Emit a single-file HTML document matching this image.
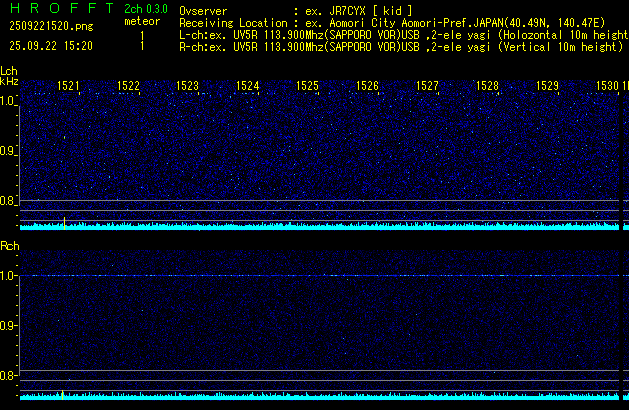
<!DOCTYPE html>
<html><head><meta charset="utf-8">
<style>
html,body{margin:0;padding:0;background:#000;width:629px;height:410px;overflow:hidden}
#root{position:relative;width:629px;height:410px;background:#000;overflow:hidden}
.fb{position:absolute}
canvas{position:absolute;left:0;top:0}
</style></head><body><div id="root">
<div class="fb" style="left:20px;top:80px;width:609px;height:151px;background:#00003c"></div>
<div class="fb" style="left:20px;top:250px;width:609px;height:151px;background:#00002c"></div>
<div class="fb" style="left:20px;top:225px;width:609px;height:5px;background:#0ff"></div>
<div class="fb" style="left:20px;top:395px;width:609px;height:5px;background:#0ff"></div>
<canvas id="c" width="629" height="410"></canvas>
<script>
var MF={
'O':[0,".XXX.|X...X|X...X|X...X|X...X|X...X|X...X|X...X|.XXX."],
'v':[3,"X...X|X...X|.X.X.|.X.X.|..X..|..X.."],
's':[3,".XXX.|X...X|.XX..|...X.|X...X|.XXX."],
'e':[3,".XXX.|X...X|XXXXX|X....|X...X|.XXX."],
'r':[3,".X.XX|.XX..|.X...|.X...|.X...|.X..."],
':':[2,".XX..|.XX..|.....|.....|.....|.XX..|.XX.."],
'x':[3,"X...X|.X.X.|..X..|..X..|.X.X.|X...X"],
'.':[7,".XX..|.XX.."],
',':[7,".XX..|.XX..|.X..."],
'J':[0,"...X.|...X.|...X.|...X.|...X.|...X.|X..X.|X..X.|.XX.."],
'R':[0,"XXXX.|X...X|X...X|X...X|X...X|XXXX.|X...X|X...X|X...X"],
'C':[0,".XXX.|X...X|X...X|X....|X....|X....|X...X|X...X|.XXX."],
'Y':[0,"X...X|X...X|.X.X.|.X.X.|..X..|..X..|..X..|..X..|..X.."],
'X':[0,"X...X|X...X|.X.X.|.X.X.|..X..|.X.X.|.X.X.|X...X|X...X"],
'[':[-1,"..XXX|..X..|..X..|..X..|..X..|..X..|..X..|..X..|..X..|..X..|..XXX"],
']':[-1,"XXX..|..X..|..X..|..X..|..X..|..X..|..X..|..X..|..X..|..X..|XXX.."],
'k':[0,"X....|X....|X....|X...X|X..X.|XXX..|X.X..|X..X.|X...X"],
'i':[0,"..X..|..X..|.....|..X..|..X..|..X..|..X..|..X..|..X.."],
'd':[0,"....X|....X|....X|.XXXX|X...X|X...X|X...X|X...X|.XXXX"],
'c':[3,".XXX.|X...X|X....|X....|X...X|.XXX."],
'n':[3,"XXXX.|X...X|X...X|X...X|X...X|X...X"],
'g':[3,".XXXX|X..X.|.XX..|X....|.XXX.|X...X|.XXX."],
'L':[0,"X....|X....|X....|X....|X....|X....|X....|X....|XXXXX"],
'o':[3,".XXX.|X...X|X...X|X...X|X...X|.XXX."],
'a':[3,".XX..|X..X.|.XXX.|X..X.|X..X.|.XX.X"],
't':[0,".X...|.X...|.X...|XXX..|.X...|.X...|.X...|.X...|..XX."],
'A':[0,"..X..|..X..|.X.X.|.X.X.|.X.X.|XXXXX|X...X|X...X|X...X"],
'm':[3,"XX.X.|X.X.X|X.X.X|X.X.X|X.X.X|X.X.X"],
'y':[3,"X...X|X...X|.X.X.|.X.X.|..X..|..X..|XX..."],
'P':[0,"XXXX.|X...X|X...X|X...X|XXXX.|X....|X....|X....|X...."],
'f':[0,".XXX.|.X...|.X...|XXX..|.X...|.X...|.X...|.X...|.X..."],
'N':[0,"X...X|XX..X|XX..X|X.X.X|X.X.X|X..XX|X..XX|X...X|X...X"],
'(':[-1,"...X.|..X..|..X..|.X...|.X...|.X...|.X...|.X...|..X..|..X..|...X."],
')':[-1,".X...|..X..|..X..|...X.|...X.|...X.|...X.|...X.|..X..|..X..|.X..."],
'E':[0,"XXXXX|X....|X....|X....|XXXX.|X....|X....|X....|XXXXX"],
'h':[0,"X....|X....|X....|XXXX.|X...X|X...X|X...X|X...X|X...X"],
'U':[0,"X...X|X...X|X...X|X...X|X...X|X...X|X...X|X...X|.XXX."],
'V':[0,"X...X|X...X|X...X|.X.X.|.X.X.|.X.X.|..X..|..X..|..X.."],
'M':[0,"X...X|XX.XX|XX.XX|XX.XX|XX.XX|X.X.X|X.X.X|X.X.X|X.X.X"],
'z':[3,"XXXXX|....X|...X.|..X..|.X...|XXXXX"],
'S':[0,".XXX.|X...X|X....|.X...|..X..|...X.|....X|X...X|.XXX."],
'B':[0,"XXXX.|X...X|X...X|X...X|XXXX.|X...X|X...X|X...X|XXXX."],
'l':[0,"..X..|..X..|..X..|..X..|..X..|..X..|..X..|..X..|..X.."],
'H':[0,"X...X|X...X|X...X|X...X|XXXXX|X...X|X...X|X...X|X...X"],
'p':[3,"XXXX.|X...X|X...X|X...X|XXXX.|X....|X...."],
'-':[4,"XXXX"],
'0':[0,".XX.|X..X|X..X|X..X|X..X|X..X|X..X|X..X|.XX."],
'1':[0,"..X.|.XX.|..X.|..X.|..X.|..X.|..X.|..X.|..X."],
'2':[0,".XX.|X..X|...X|...X|..X.|.X..|.X..|X...|XXXX"],
'3':[0,".XX.|X..X|X..X|...X|.XX.|...X|X..X|X..X|.XX."],
'4':[0,"...X.|..XX.|..XX.|.X.X.|.X.X.|X..X.|XXXXX|...X.|...X."],
'5':[0,"XXXX|X...|X...|XXX.|...X|...X|X..X|X..X|.XX."],
'6':[0,".XX.|X..X|X..X|X...|XXX.|X..X|X..X|X..X|.XX."],
'7':[0,"XXXX|...X|...X|..X.|..X.|.X..|.X..|.X..|.X.."],
'8':[0,".XX.|X..X|X..X|X..X|.XX.|X..X|X..X|X..X|.XX."],
'9':[0,".XX.|X..X|X..X|X..X|.XXX|...X|...X|X..X|.XX."]
};

(function(){
var cv=document.getElementById('c'),ctx=cv.getContext('2d');
var W=629,H=410;
var img=ctx.createImageData(W,H),d=img.data;
var seed=12345;
function rnd(){seed^=seed<<13;seed>>>=0;seed^=seed>>>17;seed^=seed<<5;seed>>>=0;return seed/4294967296;}
function px(x,y,r,g,b){if(x<0||y<0||x>=W||y>=H)return;var i=(y*W+x)*4;d[i]=r;d[i+1]=g;d[i+2]=b;d[i+3]=255;}
function rect(x0,y0,x1,y1,r,g,b){for(var y=y0;y<=y1;y++)for(var x=x0;x<=x1;x++)px(x,y,r,g,b);}
for(var i=0;i<W*H;i++){d[i*4+3]=255;}
function ray(){var u=rnd();return Math.sqrt(-2*Math.log(u+1e-12));}
function noise(y0,y1,t0,t1,cy){
  for(var y=y0;y<=y1;y++)for(var x=20;x<W;x++){
    var r=ray();
    if(r>cy){px(x,y,40,140+(rnd()*70|0),255);continue;}
    var v=255*(r-t0)/(t1-t0);
    if(v<0)v=0;
    var g=0; if(v>240){g=(v-240)*0.4; if(g>40)g=40;}
    if(v>255)v=255;
    px(x,y,0,g|0,v|0);
  }
}
noise(80,230,1.0,2.95,3.45);
noise(250,400,1.1,3.9,4.15);
// faint line in L at y=93
for(var x=20;x<W;x++){ if(rnd()<0.07) px(x,93,40,150+(rnd()*60|0),255); }
// 1kHz carrier in R
for(var x=20;x<W;x++){
  var q=rnd();
  if(q<0.14) px(x,275,50,170+(rnd()*50|0),255);
  else if(q<0.80) px(x,275,0,10+(rnd()*40|0),190+(rnd()*65|0));
  else px(x,275,0,0,80+(rnd()*90|0));
}
var G=[128,128,128];
function spec(top,marker,dist){
  [120,130,140].forEach(function(o){rect(20,top+o,W-1,top+o,G[0],G[1],G[2]);});
  for(var x=20;x<W;x++){
    var q=rnd(),h=3;
    if(q<dist[0])h=3; else if(q<dist[1])h=4; else if(q<dist[2])h=5; else if(q<dist[3])h=6; else h=7;
    rect(x,top+149-h,x,top+149,0,255,255);
  }
  rect(619,top,622,top+150,0,0,0);
  rect(19,top+26,19,top+125,G[0],G[1],G[2]);
  rect(marker[0],top+marker[1],marker[0],top+149,255,255,0);
}
spec(80,[64,137],[0.30,0.70,0.88,0.96]);
spec(250,[62,140],[0.55,0.80,0.92,0.97]);
function ticks(top,start){
  for(var y=top+start;y<=top+145;y+=10){
    var major=((y-top-25)%50===0);
    if(major) rect(14,y,17,y,255,255,0);
    else rect(16,y,17,y,255,255,0);
  }
}
ticks(80,15);
ticks(250,5);
var T=[79,139,198,258,318,378,438,498,558,618];
T.forEach(function(t){ rect(t-22,80,t,91,0,0,0); rect(t,92,t,94,255,255,0); });
rect(623,80,628,91,0,0,0);
px(64,136,60,170,255);px(64,137,240,240,0);px(64,138,60,220,60);

// ---- bitmap text ----
function glyph(x,y,rows,col){
  var rs=rows.split('|');
  for(var j=0;j<rs.length;j++)for(var i=0;i<rs[j].length;i++) if(rs[j][i]==='X') px(x+i,y+j,col[0],col[1],col[2]);
}
var YL=[255,255,0],GR=[0,255,0];
function mono(x,y,s,col){
  col=col||YL;
  for(var k=0;k<s.length;k++){var g=MF[s[k]]; if(g) glyph(x+k*6,y+g[0],g[1],col);}
}
mono(10,21,'2509221520.png');
mono(10,41,'25.09.22 15:20');
mono(125,16,'meteor');
mono(140,31,'1');
mono(140,41,'1');
mono(180,6,'Ovserver           : ex. JR7CYX [ kid ]');
mono(180,18,'Receiving Location : ex. Aomori City Aomori-Pref.JAPAN(40.49N, 140.47E)');
mono(180,30,'L-ch:ex. UV5R 113.900Mhz(SAPPORO VOR)USB ,2-ele yagi (Holozontal 10m height)');
mono(180,42,'R-ch:ex. UV5R 113.900Mhz(SAPPORO VOR)USB ,2-ele yagi (Vertical 10m height)');
for(var k=0;k<10;k++) mono(T[k]-22,81,''+(1521+k));
mono(622,81,"1");
glyph(628,81,"X|X|X|X|X|X|X|X|X",YL);
// big green HROFFT
glyph(11,3,"X......X|X......X|X......X|X......X|XXXXXXXX|X......X|X......X|X......X|X......X|X......X",GR);
glyph(31,3,"XXXXXX.|X.....X|X.....X|X.....X|XXXXXX.|X...X..|X....X.|X....X.|X.....X|X.....X",GR);
glyph(50,3,"..XXXXX..|.X.....X.|X.......X|X.......X|X.......X|X.......X|X.......X|X.......X|.X.....X.|..XXXXX..",GR);
var F="XXXXXXX|X......|X......|X......|XXXXXX.|X......|X......|X......|X......|X......";
glyph(71,3,F,GR);glyph(89,3,F,GR);
glyph(106,3,"XXXXXXX|...X...|...X...|...X...|...X...|...X...|...X...|...X...|...X...|...X...",GR);
// 2ch 0.3.0
glyph(125,4,".XXX.|X...X|....X|...X.|..X..|.X...|X....|X....|XXXXX",GR);
glyph(131,7,MF['c'][1],GR);
glyph(137,4,MF['h'][1],GR);
glyph(147,4,MF['0'][1],GR);
px(153,12,0,255,0);
glyph(155,4,".XX.|X..X|...X|...X|.XX.|...X|...X|X..X|.XX.",GR);
px(161,12,0,255,0);
glyph(163,4,MF['0'][1],GR);
// axis labels
glyph(1,66,MF['L'][1],YL); glyph(6,69,MF['c'][1],YL); glyph(12,66,MF['h'][1],YL);
glyph(0,77,"X....|X....|X..X.|X.X..|XX...|X.X..|X..X.|X...X",YL);
glyph(7,77,"X....X|X....X|X....X|X....X|XXXXXX|X....X|X....X|X....X",YL);
glyph(14,79,"XXXX|...X|..X.|.X..|X...|XXXX",YL);
var D0=".XXX.|X...X|X...X|X...X|X...X|X...X|X...X|X...X|.XXX.";
var D9=".XXX.|X...X|X...X|X...X|X...X|.XXXX|....X|X...X|.XXX.";
var D8=".XXX.|X...X|X...X|X...X|.XXX.|X...X|X...X|X...X|.XXX.";
var D1="..X|XXX|..X|..X|..X|..X|..X|..X|..X";
function lab(y,a,b){glyph(0,y,a,YL);px(6,y+8,255,255,0);glyph(8,y,b,YL);}
function lab1(y){glyph(0,y,D1,YL);px(6,y+8,255,255,0);glyph(8,y,D0,YL);}
lab1(96); lab(146,D0,D9); lab(196,D0,D8);
lab1(271); lab(321,D0,D9); lab(371,D0,D8);
glyph(1,241,"XXXXX..|X....X.|X....X.|X....X.|XXXXX..|X...X..|X....X.|X....X.|X.....X",YL);
glyph(7,244,".XXXX.|X....X|X.....|X.....|X....X|.XXXX.",YL);
glyph(14,241,MF['h'][1],YL);

ctx.putImageData(img,0,0);
})();
</script>
</div></body></html>
